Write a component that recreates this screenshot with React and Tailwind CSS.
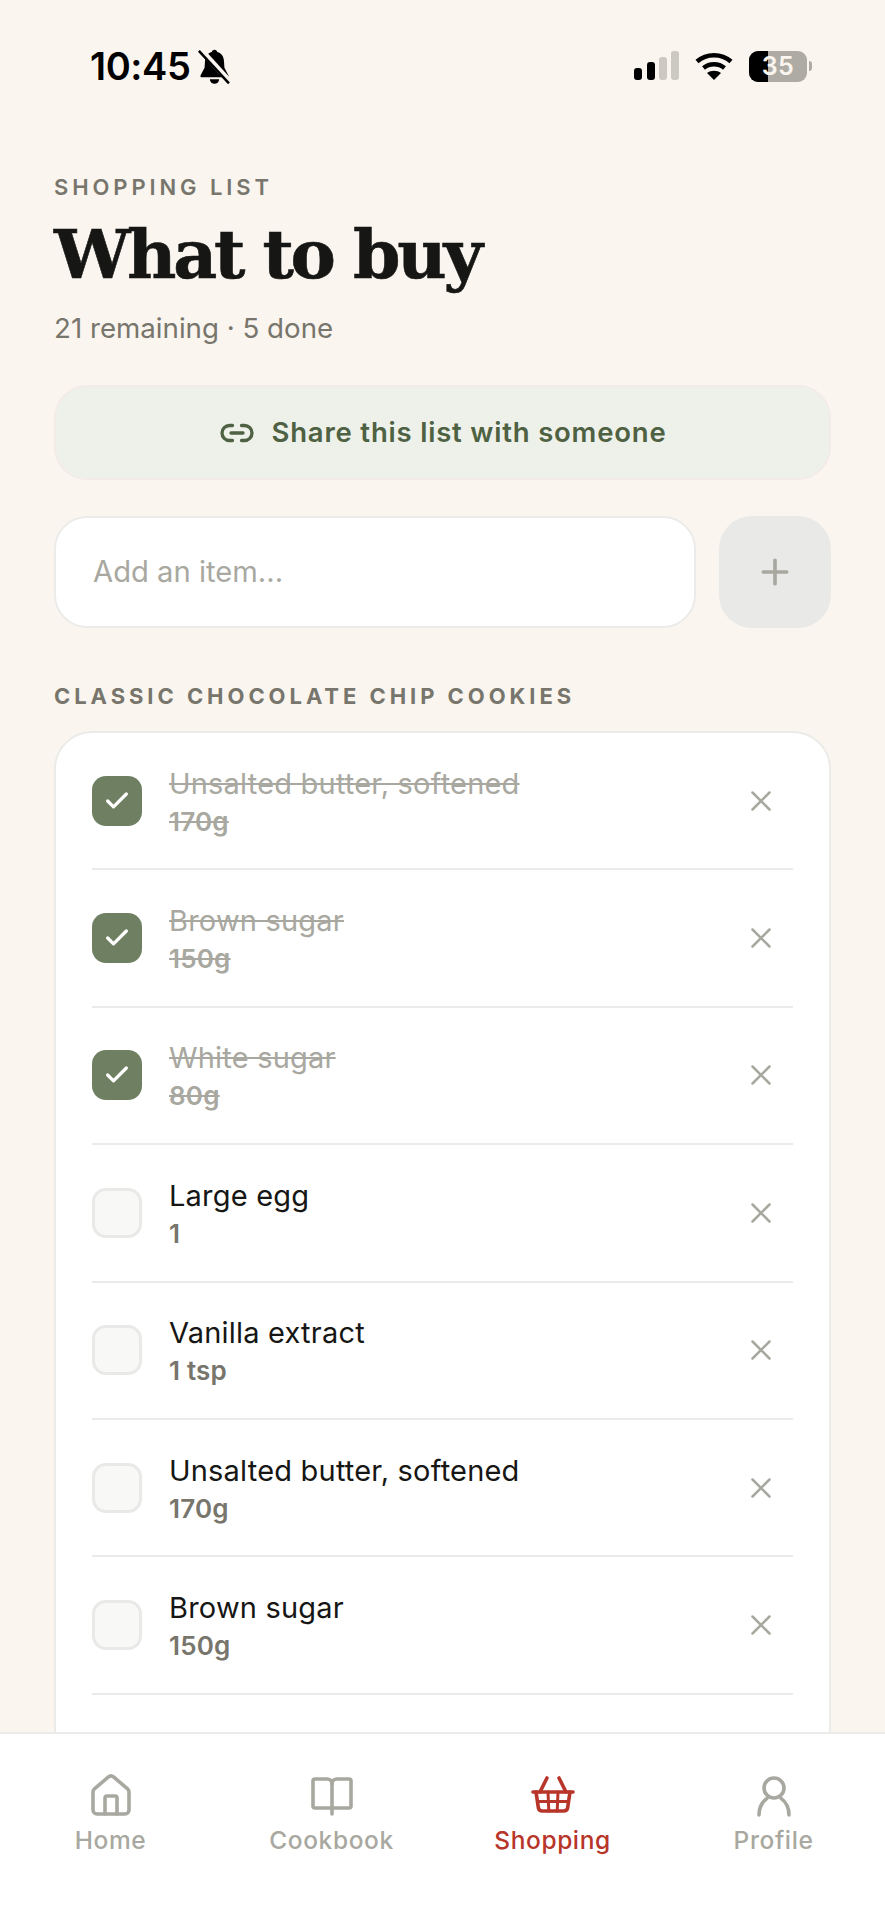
import React from 'react';
import { Check, Link2, Plus, X } from 'lucide-react';

const sans = 'font-["Inter","Liberation_Sans",sans-serif]';

const items = [
    { name: 'Unsalted butter, softened', qty: '170g', done: true },
    { name: 'Brown sugar', qty: '150g', done: true },
    { name: 'White sugar', qty: '80g', done: true },
    { name: 'Large egg', qty: '1', done: false },
    { name: 'Vanilla extract', qty: '1 tsp', done: false },
    { name: 'Unsalted butter, softened', qty: '170g', done: false },
    { name: 'Brown sugar', qty: '150g', done: false },
];

const HomeIcon = () => (
    <svg width="48" height="48" viewBox="0 0 24 24" fill="none" stroke="currentColor" strokeWidth="1.800" strokeLinecap="round" strokeLinejoin="round">
        <path d="M15 21v-8a1 1 0 0 0-1-1h-4a1 1 0 0 0-1 1v8" />
        <path d="M3 10a2 2 0 0 1 .709-1.528l7-6a2 2 0 0 1 2.582 0l7 6A2 2 0 0 1 21 10v9a2 2 0 0 1-2 2H5a2 2 0 0 1-2-2z" />
    </svg>
);

const BookIcon = () => (
    <svg width="48" height="48" viewBox="0 0 24 24" fill="none" stroke="currentColor" strokeWidth="1.800" strokeLinecap="round" strokeLinejoin="round">
        <path d="M12 6c0-1.500-1-2.500-2.500-2.500H3.500a1 1 0 0 0-1 1V17a1 1 0 0 0 1 1H12h8.500a1 1 0 0 0 1-1V4.500a1 1 0 0 0-1-1H14.500C13 3.500 12 4.500 12 6z" />
        <path d="M12 6V21" />
    </svg>
);

const BasketIcon = () => (
    <svg width="48" height="48" viewBox="0 0 24 24" fill="none" stroke="currentColor" strokeWidth="1.800" strokeLinecap="round" strokeLinejoin="round">
        <path d="M9 3 5.500 10" />
        <path d="M15 3l3.500 7" />
        <path d="M2 10h20" />
        <path d="M3.500 10l1.200 8a2 2 0 0 0 2 1.500h10.600a2 2 0 0 0 2-1.500l1.200-8" />
        <path d="M4.500 14.800h15" strokeWidth="1.500" />
        <path d="M9.500 10l.4 9.500M14.500 10l-.4 9.500" strokeWidth="1.500" />
    </svg>
);

const UserIcon = () => (
    <svg width="48" height="48" viewBox="0 0 24 24" fill="none" stroke="currentColor" strokeWidth="1.800" strokeLinecap="round" strokeLinejoin="round">
        <circle cx="12" cy="8" r="5" />
        <path d="M4.500 21.500c0-3.500 1.500-6.500 4-8.300" />
        <path d="M19.500 21.500c0-3.500-1.500-6.500-4-8.300" />
    </svg>
);

const StatusBar = () => (
    <div className="h-[132px] flex items-center justify-between pl-[90px] pr-[73px] shrink-0">
        <div className="flex items-center gap-[6px]">
            <span className={`${sans} text-[38px] font-semibold tracking-[-0.4px] text-black leading-none`}>10:45</span>
            <svg width="37" height="37" viewBox="0 0 32 32" fill="black">
                <path d="M16 1.500c-1.300 0-2.200.9-2.400 2-3.700 1-5.600 4-5.800 8l-.4 5.500L4 23.500c-.5 1 0 1.800 1 1.800h22c1 0 1.500-.8 1-1.800l-3.400-6.500-.4-5.500c-.2-4-2.100-7-5.800-8-.2-1.100-1.100-2-2.400-2z" />
                <path d="M12 27h8a4 4 0 0 1-8 0z" />
                <path d="M4 1.500 29 29" stroke="#faf5ef" strokeWidth="5" />
                <path d="M2.500 2.500 28.500 30.500" stroke="black" strokeWidth="2.200" />
            </svg>
        </div>
        <div className="flex items-center">
            <svg width="46" height="30" viewBox="0 0 46 30">
                <rect x="0" y="17" width="8" height="12" rx="3" fill="black" />
                <rect x="13" y="11" width="8" height="18" rx="3" fill="black" />
                <rect x="25" y="6" width="8" height="23" rx="3" fill="#ccc9c3" />
                <rect x="37" y="0" width="8" height="29" rx="3" fill="#ccc9c3" />
            </svg>
            <svg className="ml-[15px]" width="38" height="30" viewBox="0 0 38 30" fill="none" stroke="black" strokeWidth="4.500">
                <path d="M2 10.500C11.500 2 26.500 2 36 10.500" />
                <path d="M8.500 17C14.500 12 23.500 12 29.500 17" />
                <path d="M19 29l-7-7c4-3 10-3 14 0z" fill="black" stroke="none" />
            </svg>
            <div className="ml-[16px] flex items-center">
                <div className="relative w-[58px] h-[31px] rounded-[9px] overflow-hidden bg-[#aeaba4] flex items-center justify-center">
                    <div className="absolute left-0 top-0 bottom-0 w-[19px] bg-black" />
                    <span className={`${sans} relative text-[25px] font-semibold text-[#faf5ef] leading-none tracking-[0.5px]`}>35</span>
                </div>
                <div className="w-[3px] h-[10px] ml-[2px] rounded-r-full bg-[#aeaba4]" />
            </div>
        </div>
    </div>
);

const ListRow = ({ item }) => (
    <div className="h-[137.4px] flex items-center shrink-0 border-b-2 border-[#ebebe9]">
        {item.done ? (
            <div className="w-[50px] h-[50px] rounded-[14px] bg-[#6f8062] flex items-center justify-center shrink-0">
                <Check size={28} strokeWidth={2.8} color="white" />
            </div>
        ) : (
            <div className="w-[50px] h-[50px] rounded-[14px] bg-[#f8f8f7] border-[3px] border-[#e9e9e7] shrink-0" />
        )}
        <div className="ml-[27px] pt-[2px] flex-1 min-w-0">
            <div className={`text-[29px] leading-[38px] tracking-[0.2px] ${item.done ? 'text-[#a8a8a0] line-through' : 'text-[#161614]'}`}>{item.name}</div>
            <div className={`mt-[2px] text-[26px] leading-[34px] font-semibold tracking-[0.2px] ${item.done ? 'text-[#a8a8a0] line-through' : 'text-[#77756c]'}`}>{item.qty}</div>
        </div>
        <X size={34} strokeWidth={1.8} color="#a8a8a0" className="mr-[15px] shrink-0" />
    </div>
);

const NavItem = ({ icon, label, active }) => (
    <div className={`flex flex-col items-center w-[221px] ${active ? 'text-[#b8352a]' : 'text-[#a8a8a0]'}`}>
        {icon}
        <span className="mt-[4px] text-[24.500px] leading-[32px] font-medium tracking-[0.6px]">{label}</span>
    </div>
);

const App = () => {
    return (
        <div className={`${sans} w-[885px] h-[1920px] bg-[#faf5ef] flex flex-col overflow-hidden`}>
            <StatusBar />
            <main className="flex-1 min-h-0 overflow-hidden px-[54px] pt-[41px]">
                <div className="text-[22px] leading-[28px] font-semibold tracking-[3.900px] text-[#77756c]">SHOPPING LIST</div>
                <h1 className='mt-[10px] font-["DejaVu_Serif",serif] font-bold text-[68px] leading-[86px] tracking-[-3.300px] text-[#161614] [-webkit-text-stroke:0.6px_#161614]'>What to buy</h1>
                <p className="mt-[13px] text-[27.700px] leading-[36px] text-[#77756c]">21 remaining · 5 done</p>

                <button className="mt-[39px] w-full h-[95px] rounded-[33px] bg-[#eef1ea] border-2 border-[#f3ebe6] flex items-center justify-center gap-[17px] text-[#4e6142]">
                    <Link2 size={36} strokeWidth={2.2} />
                    <span className="text-[27.500px] font-semibold tracking-[0.8px]">Share this list with someone</span>
                </button>

                <div className="mt-[36px] flex gap-[23px]">
                    <div className="flex-1 h-[112px] rounded-[33px] bg-white border-2 border-[#ebebe9] flex items-center pl-[37px] text-[29.200px] text-[#a8a8a0]">
                        Add an item...
                    </div>
                    <button className="w-[112px] h-[112px] rounded-[33px] bg-[#e9e9e7] flex items-center justify-center">
                        <Plus size={40} strokeWidth={2.2} color="#a8a8a0" />
                    </button>
                </div>

                <div className="mt-[54px] text-[22px] leading-[28px] font-bold tracking-[3.950px] text-[#77756c]">CLASSIC CHOCOLATE CHIP COOKIES</div>

                <div className="mt-[21px] rounded-t-[38px] bg-white border-2 border-[#ebebe9] px-[36px] flex flex-col">
                    {items.map((item, i) => (
                        <ListRow key={i} item={item} />
                    ))}
                    <div className="h-[60px]" />
                </div>
            </main>
            <nav className="h-[188px] shrink-0 bg-white border-t-2 border-[#ebebe9] flex pt-[38px]">
                <NavItem icon={<HomeIcon />} label="Home" />
                <NavItem icon={<BookIcon />} label="Cookbook" />
                <NavItem icon={<BasketIcon />} label="Shopping" active />
                <NavItem icon={<UserIcon />} label="Profile" />
            </nav>
        </div>
    );
};

export default App;
